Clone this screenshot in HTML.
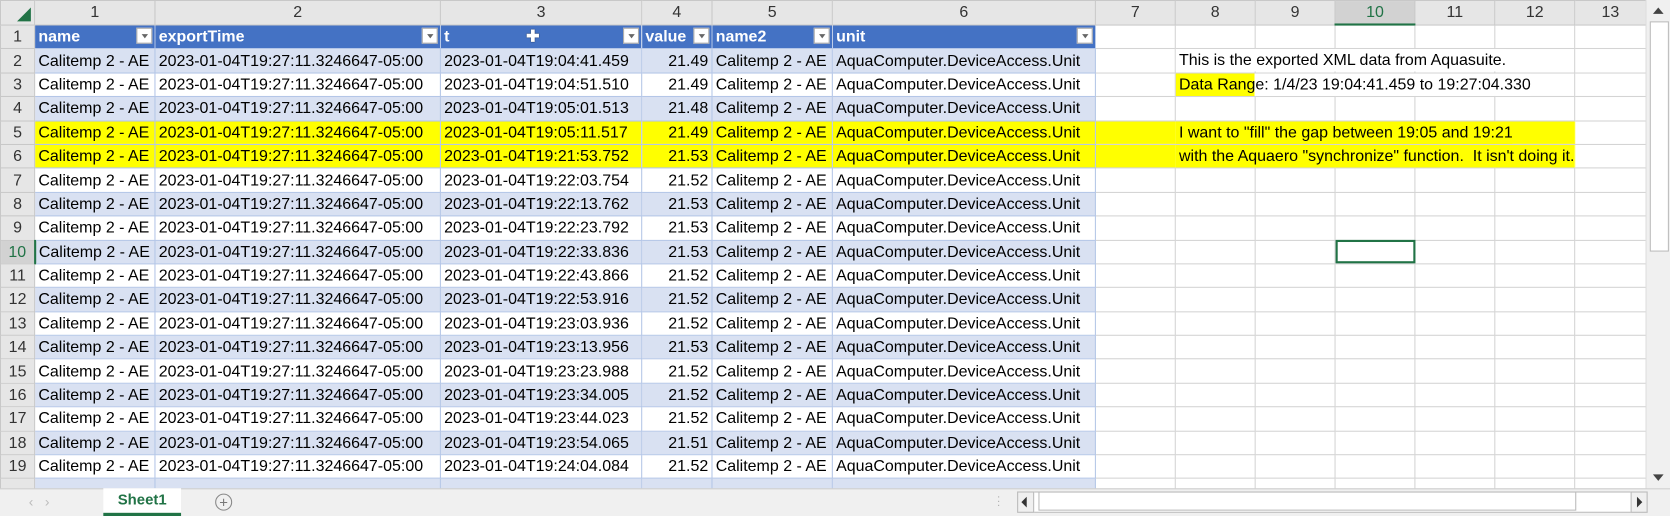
<!DOCTYPE html><html><head><style>
html,body{margin:0;padding:0;width:1670px;height:516px;overflow:hidden;background:#fff}
#w{position:absolute;left:0;top:0;width:1568px;height:484px;transform:scale(1.06505,1.06612);transform-origin:0 0;font-family:"Liberation Sans",sans-serif;font-size:15px;color:#000;overflow:hidden}
table{border-collapse:collapse;table-layout:fixed;position:absolute;left:0;top:0;width:1545px}
td{height:21.4px;padding:0 3px;border:1px solid #d4d4d4;white-space:nowrap;overflow:hidden;line-height:21px}
tr.ch td{height:21px;background:#e6e6e6;border-color:#c8c8c8;text-align:center;font-size:15px;color:#333;padding:0}
td.rh{background:#e6e6e6;border-color:#c8c8c8;text-align:center;color:#333;font-size:15px;padding:0}
tr.b td.d{background:#d9e1f2}
td.d{border-color:#b4c6e7}
tr.y td.d,tr.y td.yy{background:#ffff00}
td.yy{border-left-color:#ff0;border-right-color:#ff0}
tr.h td.d{background:#4472c4;color:#fff;font-weight:bold;position:relative}
.dd{position:absolute;right:2px;top:2px;width:15px;height:15px;background:#fff;border:1px solid #aaa;box-sizing:border-box}
.dd:after{content:"";position:absolute;left:4px;top:5px;border:3px solid transparent;border-top:4px solid #666}
.r{text-align:right}
.note{position:absolute;left:1104px;padding-left:3px;height:21px;line-height:21px;font-size:15px;white-space:nowrap;background:#fff}
</style></head><body><div id="w">
<table>
<colgroup><col style="width:32px"><col style="width:113px"><col style="width:268px"><col style="width:189px"><col style="width:66px"><col style="width:113px"><col style="width:247px"><col style="width:75px"><col style="width:75px"><col style="width:75px"><col style="width:75px"><col style="width:75px"><col style="width:75px"><col style="width:67px"></colgroup>
<tr class="ch"><td style="position:relative"><div style="position:absolute;right:3px;bottom:3px;border-left:13px solid transparent;border-bottom:13px solid #217346"></div></td><td>1</td><td>2</td><td>3</td><td>4</td><td>5</td><td>6</td><td>7</td><td>8</td><td>9</td><td style="background:#d2d2d2;color:#217346;border-bottom:2px solid #217346">10</td><td>11</td><td>12</td><td>13</td></tr>
<tr class="h"><td class="rh">1</td><td class="d">name<span class="dd"></span></td><td class="d">exportTime<span class="dd"></span></td><td class="d">t<span style="position:absolute;left:80px;top:0;color:#fff;text-shadow:0 0 1px #000">✚</span><span class="dd"></span></td><td class="d">value<span class="dd"></span></td><td class="d">name2<span class="dd"></span></td><td class="d">unit<span class="dd"></span></td><td></td><td></td><td></td><td></td><td></td><td></td><td></td></tr>
<tr class="b"><td class="rh">2</td><td class="d">Calitemp 2 - AE</td><td class="d">2023-01-04T19:27:11.3246647-05:00</td><td class="d">2023-01-04T19:04:41.459</td><td class="d r">21.49</td><td class="d">Calitemp 2 - AE</td><td class="d">AquaComputer.DeviceAccess.Unit</td><td></td><td></td><td></td><td></td><td></td><td></td><td></td></tr>
<tr><td class="rh">3</td><td class="d">Calitemp 2 - AE</td><td class="d">2023-01-04T19:27:11.3246647-05:00</td><td class="d">2023-01-04T19:04:51.510</td><td class="d r">21.49</td><td class="d">Calitemp 2 - AE</td><td class="d">AquaComputer.DeviceAccess.Unit</td><td></td><td style="background:#ff0"></td><td></td><td></td><td></td><td></td><td></td></tr>
<tr class="b"><td class="rh">4</td><td class="d">Calitemp 2 - AE</td><td class="d">2023-01-04T19:27:11.3246647-05:00</td><td class="d">2023-01-04T19:05:01.513</td><td class="d r">21.48</td><td class="d">Calitemp 2 - AE</td><td class="d">AquaComputer.DeviceAccess.Unit</td><td></td><td></td><td></td><td></td><td></td><td></td><td></td></tr>
<tr class="y"><td class="rh">5</td><td class="d">Calitemp 2 - AE</td><td class="d">2023-01-04T19:27:11.3246647-05:00</td><td class="d">2023-01-04T19:05:11.517</td><td class="d r">21.49</td><td class="d">Calitemp 2 - AE</td><td class="d">AquaComputer.DeviceAccess.Unit</td><td class="yy"></td><td class="yy"></td><td class="yy"></td><td class="yy"></td><td class="yy"></td><td class="yy"></td><td></td></tr>
<tr class="y"><td class="rh">6</td><td class="d">Calitemp 2 - AE</td><td class="d">2023-01-04T19:27:11.3246647-05:00</td><td class="d">2023-01-04T19:21:53.752</td><td class="d r">21.53</td><td class="d">Calitemp 2 - AE</td><td class="d">AquaComputer.DeviceAccess.Unit</td><td class="yy"></td><td class="yy"></td><td class="yy"></td><td class="yy"></td><td class="yy"></td><td class="yy"></td><td></td></tr>
<tr><td class="rh">7</td><td class="d">Calitemp 2 - AE</td><td class="d">2023-01-04T19:27:11.3246647-05:00</td><td class="d">2023-01-04T19:22:03.754</td><td class="d r">21.52</td><td class="d">Calitemp 2 - AE</td><td class="d">AquaComputer.DeviceAccess.Unit</td><td></td><td></td><td></td><td></td><td></td><td></td><td></td></tr>
<tr class="b"><td class="rh">8</td><td class="d">Calitemp 2 - AE</td><td class="d">2023-01-04T19:27:11.3246647-05:00</td><td class="d">2023-01-04T19:22:13.762</td><td class="d r">21.53</td><td class="d">Calitemp 2 - AE</td><td class="d">AquaComputer.DeviceAccess.Unit</td><td></td><td></td><td></td><td></td><td></td><td></td><td></td></tr>
<tr><td class="rh">9</td><td class="d">Calitemp 2 - AE</td><td class="d">2023-01-04T19:27:11.3246647-05:00</td><td class="d">2023-01-04T19:22:23.792</td><td class="d r">21.53</td><td class="d">Calitemp 2 - AE</td><td class="d">AquaComputer.DeviceAccess.Unit</td><td></td><td></td><td></td><td></td><td></td><td></td><td></td></tr>
<tr class="b"><td class="rh" style="background:#d2d2d2;color:#217346;border-right:2px solid #217346">10</td><td class="d">Calitemp 2 - AE</td><td class="d">2023-01-04T19:27:11.3246647-05:00</td><td class="d">2023-01-04T19:22:33.836</td><td class="d r">21.53</td><td class="d">Calitemp 2 - AE</td><td class="d">AquaComputer.DeviceAccess.Unit</td><td></td><td></td><td></td><td style="outline:2px solid #217346;outline-offset:-2px"></td><td></td><td></td><td></td></tr>
<tr><td class="rh">11</td><td class="d">Calitemp 2 - AE</td><td class="d">2023-01-04T19:27:11.3246647-05:00</td><td class="d">2023-01-04T19:22:43.866</td><td class="d r">21.52</td><td class="d">Calitemp 2 - AE</td><td class="d">AquaComputer.DeviceAccess.Unit</td><td></td><td></td><td></td><td></td><td></td><td></td><td></td></tr>
<tr class="b"><td class="rh">12</td><td class="d">Calitemp 2 - AE</td><td class="d">2023-01-04T19:27:11.3246647-05:00</td><td class="d">2023-01-04T19:22:53.916</td><td class="d r">21.52</td><td class="d">Calitemp 2 - AE</td><td class="d">AquaComputer.DeviceAccess.Unit</td><td></td><td></td><td></td><td></td><td></td><td></td><td></td></tr>
<tr><td class="rh">13</td><td class="d">Calitemp 2 - AE</td><td class="d">2023-01-04T19:27:11.3246647-05:00</td><td class="d">2023-01-04T19:23:03.936</td><td class="d r">21.52</td><td class="d">Calitemp 2 - AE</td><td class="d">AquaComputer.DeviceAccess.Unit</td><td></td><td></td><td></td><td></td><td></td><td></td><td></td></tr>
<tr class="b"><td class="rh">14</td><td class="d">Calitemp 2 - AE</td><td class="d">2023-01-04T19:27:11.3246647-05:00</td><td class="d">2023-01-04T19:23:13.956</td><td class="d r">21.53</td><td class="d">Calitemp 2 - AE</td><td class="d">AquaComputer.DeviceAccess.Unit</td><td></td><td></td><td></td><td></td><td></td><td></td><td></td></tr>
<tr><td class="rh">15</td><td class="d">Calitemp 2 - AE</td><td class="d">2023-01-04T19:27:11.3246647-05:00</td><td class="d">2023-01-04T19:23:23.988</td><td class="d r">21.52</td><td class="d">Calitemp 2 - AE</td><td class="d">AquaComputer.DeviceAccess.Unit</td><td></td><td></td><td></td><td></td><td></td><td></td><td></td></tr>
<tr class="b"><td class="rh">16</td><td class="d">Calitemp 2 - AE</td><td class="d">2023-01-04T19:27:11.3246647-05:00</td><td class="d">2023-01-04T19:23:34.005</td><td class="d r">21.52</td><td class="d">Calitemp 2 - AE</td><td class="d">AquaComputer.DeviceAccess.Unit</td><td></td><td></td><td></td><td></td><td></td><td></td><td></td></tr>
<tr><td class="rh">17</td><td class="d">Calitemp 2 - AE</td><td class="d">2023-01-04T19:27:11.3246647-05:00</td><td class="d">2023-01-04T19:23:44.023</td><td class="d r">21.52</td><td class="d">Calitemp 2 - AE</td><td class="d">AquaComputer.DeviceAccess.Unit</td><td></td><td></td><td></td><td></td><td></td><td></td><td></td></tr>
<tr class="b"><td class="rh">18</td><td class="d">Calitemp 2 - AE</td><td class="d">2023-01-04T19:27:11.3246647-05:00</td><td class="d">2023-01-04T19:23:54.065</td><td class="d r">21.51</td><td class="d">Calitemp 2 - AE</td><td class="d">AquaComputer.DeviceAccess.Unit</td><td></td><td></td><td></td><td></td><td></td><td></td><td></td></tr>
<tr><td class="rh">19</td><td class="d">Calitemp 2 - AE</td><td class="d">2023-01-04T19:27:11.3246647-05:00</td><td class="d">2023-01-04T19:24:04.084</td><td class="d r">21.52</td><td class="d">Calitemp 2 - AE</td><td class="d">AquaComputer.DeviceAccess.Unit</td><td></td><td></td><td></td><td></td><td></td><td></td><td></td></tr>
<tr class="b"><td class="rh"></td><td class="d"></td><td class="d"></td><td class="d"></td><td class="d"></td><td class="d"></td><td class="d"></td><td></td><td></td><td></td><td></td><td></td><td></td><td></td></tr>
</table>
<div class="note" style="top:46px">This is the exported XML data from Aquasuite.</div>
<div class="note" style="top:69px;background:linear-gradient(90deg,#ff0 74px,#fff 74px)">Data Range: 1/4/23 19:04:41.459 to 19:27:04.330</div>
<div class="note" style="top:114px;background:#ff0">I want to "fill" the gap between 19:05 and 19:21</div>
<div class="note" style="top:136px;background:linear-gradient(90deg,#ff0 374px,#fff 374px)">with the Aquaero "synchronize" function.&nbsp; It isn't doing it.</div>
<div style="position:absolute;left:1545px;top:0;width:23px;height:458px;background:#f0f0f0;border-left:1px solid #ddd">
<div style="position:absolute;left:6px;top:7px;border:5px solid transparent;border-bottom:6px solid #444;border-top:0"></div>
<div style="position:absolute;left:3px;top:20px;width:16px;height:214px;background:#fff;border:1px solid #bbb"></div>
<div style="position:absolute;left:6px;top:445px;border:5px solid transparent;border-top:6px solid #444;border-bottom:0"></div>
</div>
<div style="position:absolute;left:0;top:458px;width:1568px;height:26px;background:#f0f0f0;border-top:1px solid #ccc">
<span style="position:absolute;left:27px;top:4px;color:#bbb;font-size:13px">‹&nbsp;&nbsp;&nbsp;›</span>
<div style="position:absolute;left:97px;top:-1px;width:73px;height:23px;background:#fff;border-bottom:3px solid #217346;color:#217346;font-weight:bold;text-align:center;line-height:20px;font-size:14px">Sheet1</div>
<div style="position:absolute;left:202px;top:4px;width:14px;height:14px;border:1px solid #888;border-radius:50%;text-align:center;line-height:14px;color:#777;font-size:14px">+</div>
<div style="position:absolute;left:936px;top:6px;color:#aaa;font-size:10px;line-height:4px">·<br>·<br>·</div>
<div style="position:absolute;left:955px;top:2px;width:590px;height:18px;background:#fff;border:1px solid #bbb"></div>
<div style="position:absolute;left:955px;top:2px;width:14px;height:18px;background:#f0f0f0;border:1px solid #bbb"><div style="position:absolute;left:3px;top:4px;border:5px solid transparent;border-right:5px solid #333;border-left:0"></div></div>
<div style="position:absolute;left:975px;top:2px;width:505px;height:18px;border:1px solid #bbb;box-sizing:border-box"></div>
<div style="position:absolute;left:1531px;top:2px;width:14px;height:18px;background:#f0f0f0;border:1px solid #bbb"><div style="position:absolute;left:5px;top:4px;border:5px solid transparent;border-left:5px solid #333;border-right:0"></div></div>
</div>
</div></body></html>
